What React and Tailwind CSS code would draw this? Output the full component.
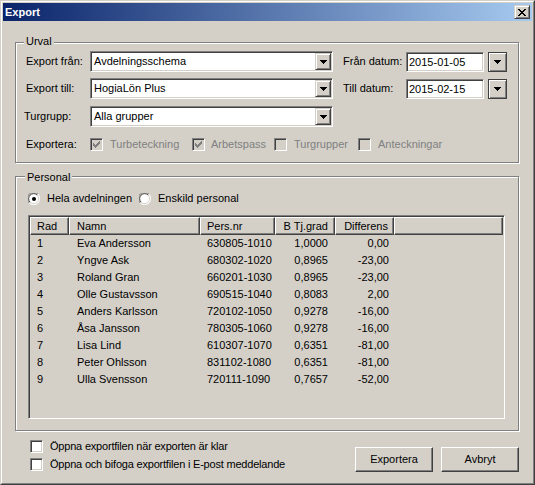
import React from "react";

const sunken =
  "border border-t-[#808080] border-l-[#808080] border-r-white border-b-white shadow-[inset_1px_1px_0_#404040,inset_-1px_-1px_0_#d4d0c8]";
const raisedSmall =
  "border border-t-[#d4d0c8] border-l-[#d4d0c8] border-b-[#404040] border-r-[#404040] shadow-[inset_1px_1px_0_#fff,inset_-1px_-1px_0_#808080] bg-[#d4d0c8]";
const hdr =
  "h-full flex items-center border border-t-white border-l-white border-b-[#404040] border-r-[#404040] shadow-[inset_-1px_-1px_0_#808080]";
const groupBox =
  "relative w-[504px] border border-[#808080] shadow-[inset_1px_1px_0_#fff,1px_1px_0_#fff]";

function Arrow() {
  return (
    <svg width="7" height="4" viewBox="0 0 7 4" shapeRendering="crispEdges">
      <rect x="0" y="0" width="7" height="1" fill="#000" />
      <rect x="1" y="1" width="5" height="1" fill="#000" />
      <rect x="2" y="2" width="3" height="1" fill="#000" />
      <rect x="3" y="3" width="1" height="1" fill="#000" />
    </svg>
  );
}

function Combo({ text }) {
  return (
    <div className={`w-[243px] h-[21px] bg-white p-px flex ${sunken}`}>
      <div className="flex-1 flex items-center pl-[2px]">{text}</div>
      <div className={`w-[16px] h-full flex items-center justify-center ${raisedSmall}`}>
        <Arrow />
      </div>
    </div>
  );
}

function DateField({ value }) {
  return (
    <div className="flex items-center mt-[1px]">
      <div className={`w-[78px] h-[20px] bg-white p-px flex items-center pl-[2px] ${sunken}`}>{value}</div>
      <div className="ml-[4px] w-[19px] h-[20px] border border-[#404040] shadow-[inset_1px_1px_0_#fff,inset_-1px_-1px_0_#808080] bg-[#d4d0c8] flex items-center justify-center">
        <Arrow />
      </div>
    </div>
  );
}

function CheckMark({ color }) {
  const ys = [2, 3, 4, 3, 2, 1, 0];
  return (
    <svg width="7" height="7" viewBox="0 0 7 7" shapeRendering="crispEdges">
      {ys.map((y, i) => (
        <rect key={i} x={i} y={y} width="1" height="3" fill={color} />
      ))}
    </svg>
  );
}

function Check({ checked, disabled }) {
  return (
    <div
      className={`w-[13px] h-[13px] shrink-0 flex items-center justify-center ${sunken} ${
        disabled ? "bg-[#d4d0c8]" : "bg-white"
      }`}
    >
      {checked && <CheckMark color={disabled ? "#808080" : "#000"} />}
    </div>
  );
}

function Radio({ on }) {
  return (
    <svg width="12" height="12" viewBox="0 0 12 12" className="shrink-0">
      <circle cx="6" cy="6" r="5.5" fill="#fff" />
      <path d="M1.1 9.9 A5.5 5.5 0 0 1 9.9 1.1" stroke="#808080" strokeWidth="1" fill="none" />
      <path d="M9.9 1.1 A5.5 5.5 0 0 1 1.1 9.9" stroke="#ffffff" strokeWidth="1" fill="none" />
      <path d="M2.1 9.2 A4.5 4.5 0 0 1 9.2 2.1" stroke="#404040" strokeWidth="1" fill="none" />
      <path d="M9.2 2.1 A4.5 4.5 0 0 1 2.1 9.2" stroke="#d4d0c8" strokeWidth="1" fill="none" />
      {on && <circle cx="6" cy="6" r="2" fill="#000" />}
    </svg>
  );
}

function CloseGlyph() {
  const rows = [
    [[0, 2], [6, 2]],
    [[1, 2], [5, 2]],
    [[2, 4]],
    [[3, 2]],
    [[2, 4]],
    [[1, 2], [5, 2]],
    [[0, 2], [6, 2]],
  ];
  return (
    <svg width="8" height="7" viewBox="0 0 8 7" shapeRendering="crispEdges">
      {rows.map((segs, y) =>
        segs.map(([x, w], j) => <rect key={`${y}-${j}`} x={x} y={y} width={w} height="1" fill="#000" />)
      )}
    </svg>
  );
}

const rows = [
  ["1", "Eva Andersson", "630805-1010", "1,0000", "0,00"],
  ["2", "Yngve Ask", "680302-1020", "0,8965", "-23,00"],
  ["3", "Roland Gran", "660201-1030", "0,8965", "-23,00"],
  ["4", "Olle Gustavsson", "690515-1040", "0,8083", "2,00"],
  ["5", "Anders Karlsson", "720102-1050", "0,9278", "-16,00"],
  ["6", "Åsa Jansson", "780305-1060", "0,9278", "-16,00"],
  ["7", "Lisa Lind", "610307-1070", "0,6351", "-81,00"],
  ["8", "Peter Ohlsson", "831102-1080", "0,6351", "-81,00"],
  ["9", "Ulla Svensson", "720111-1090", "0,7657", "-52,00"],
];

export default function App() {
  return (
    <div className="w-[535px] h-[485px] bg-[#d4d0c8] border border-t-[#d4d0c8] border-l-[#d4d0c8] border-b-[#404040] border-r-[#404040] text-[11px] leading-[13px] text-black font-['Liberation_Sans',Arial,sans-serif]">
      <div className="h-full border border-t-white border-l-white border-b-[#808080] border-r-[#808080] p-px flex flex-col">
        {/* Title bar */}
        <div className="h-[18px] flex items-center justify-between bg-[linear-gradient(to_right,#0a246a,#a6caf0)]">
          <span className="pl-[2px] font-bold text-white">Export</span>
          <div className={`w-[16px] h-[14px] mr-[2px] flex items-center justify-center ${raisedSmall}`}>
            <CloseGlyph />
          </div>
        </div>

        <div className="flex flex-col pl-[12px]">
          {/* Urval */}
          <div className={`${groupBox} h-[121px] mt-[21px]`}>
            <span className="absolute left-[8px] top-[-8px] px-[2px] bg-[#d4d0c8]">Urval</span>
            <div className="flex flex-col pt-[8px] pl-[10px]">
              <div className="flex items-center h-[21px]">
                <span className="w-[64px]">Export från:</span>
                <Combo text="Avdelningsschema" />
                <span className="ml-[10px] w-[63px]">Från datum:</span>
                <DateField value="2015-01-05" />
              </div>
              <div className="flex items-center h-[21px] mt-[6px]">
                <span className="w-[64px]">Export till:</span>
                <Combo text="HogiaLön Plus" />
                <span className="ml-[10px] w-[63px]">Till datum:</span>
                <DateField value="2015-02-15" />
              </div>
              <div className="flex items-center h-[21px] mt-[7px]">
                <span className="w-[66px] -ml-[2px]">Turgrupp:</span>
                <Combo text="Alla grupper" />
              </div>
              <div className="flex items-center h-[13px] mt-[11px]">
                <span className="w-[64px]">Exportera:</span>
                <div className="flex items-center w-[102px]">
                  <Check checked disabled />
                  <span className="ml-[7px] text-[#808080]">Turbeteckning</span>
                </div>
                <div className="flex items-center w-[82px]">
                  <Check checked disabled />
                  <span className="ml-[6px] text-[#808080]">Arbetspass</span>
                </div>
                <div className="flex items-center w-[84px]">
                  <Check disabled />
                  <span className="ml-[7px] text-[#808080]">Turgrupper</span>
                </div>
                <div className="flex items-center">
                  <Check disabled />
                  <span className="ml-[7px] text-[#808080]">Anteckningar</span>
                </div>
              </div>
            </div>
          </div>

          {/* Personal */}
          <div className={`${groupBox} h-[255px] mt-[13px]`}>
            <span className="absolute left-[9px] top-[-6px] px-[2px] bg-[#d4d0c8]">Personal</span>
            <div className="flex flex-col pl-[12px]">
              <div className="flex items-center h-[13px] mt-[15px]">
                <div className="flex items-center w-[111px]">
                  <Radio on />
                  <span className="ml-[7px]">Hela avdelningen</span>
                </div>
                <div className="flex items-center">
                  <Radio />
                  <span className="ml-[7px]">Enskild personal</span>
                </div>
              </div>
              <div className={`mt-[10px] w-[477px] h-[204px] p-px bg-[#d4d0c8] flex flex-col ${sunken}`}>
                <div className="h-[18px] flex">
                  <div className={`${hdr} w-[39px] pl-[6px]`}>Rad</div>
                  <div className={`${hdr} w-[131px] pl-[7px]`}>Namn</div>
                  <div className={`${hdr} w-[75px] pl-[6px]`}>Pers.nr</div>
                  <div className={`${hdr} w-[60px] justify-end pr-[6px]`}>B Tj.grad</div>
                  <div className={`${hdr} w-[59px] justify-end pr-[5px]`}>Differens</div>
                  <div className={`${hdr} flex-1`} />
                </div>
                {rows.map((r) => (
                  <div key={r[0]} className="h-[17px] flex items-center">
                    <div className="w-[39px] pl-[7px]">{r[0]}</div>
                    <div className="w-[131px] pl-[8px]">{r[1]}</div>
                    <div className="w-[75px] pl-[7px]">{r[2]}</div>
                    <div className="w-[60px] text-right pr-[7px]">{r[3]}</div>
                    <div className="w-[59px] text-right pr-[5px]">{r[4]}</div>
                  </div>
                ))}
              </div>
            </div>
          </div>

          {/* Bottom */}
          <div className="flex w-[504px]">
            <div className="flex flex-col ml-[15px] mt-[9px] gap-[5px]">
              <div className="flex items-center h-[13px]">
                <Check />
                <span className="ml-[7px] tracking-[-0.2px]">Öppna exportfilen när exporten är klar</span>
              </div>
              <div className="flex items-center h-[13px]">
                <Check />
                <span className="ml-[7px] tracking-[-0.2px]">Öppna och bifoga exportfilen i E-post meddelande</span>
              </div>
            </div>
            <div className="ml-auto mt-[16px] flex gap-[8px]">
              <div className="w-[78px] h-[25px] flex items-center justify-center border border-t-white border-l-white border-b-[#404040] border-r-[#404040] shadow-[inset_-1px_-1px_0_#808080]">
                Exportera
              </div>
              <div className="w-[78px] h-[25px] flex items-center justify-center border border-t-white border-l-white border-b-[#404040] border-r-[#404040] shadow-[inset_-1px_-1px_0_#808080]">
                Avbryt
              </div>
            </div>
          </div>
        </div>
      </div>
    </div>
  );
}
